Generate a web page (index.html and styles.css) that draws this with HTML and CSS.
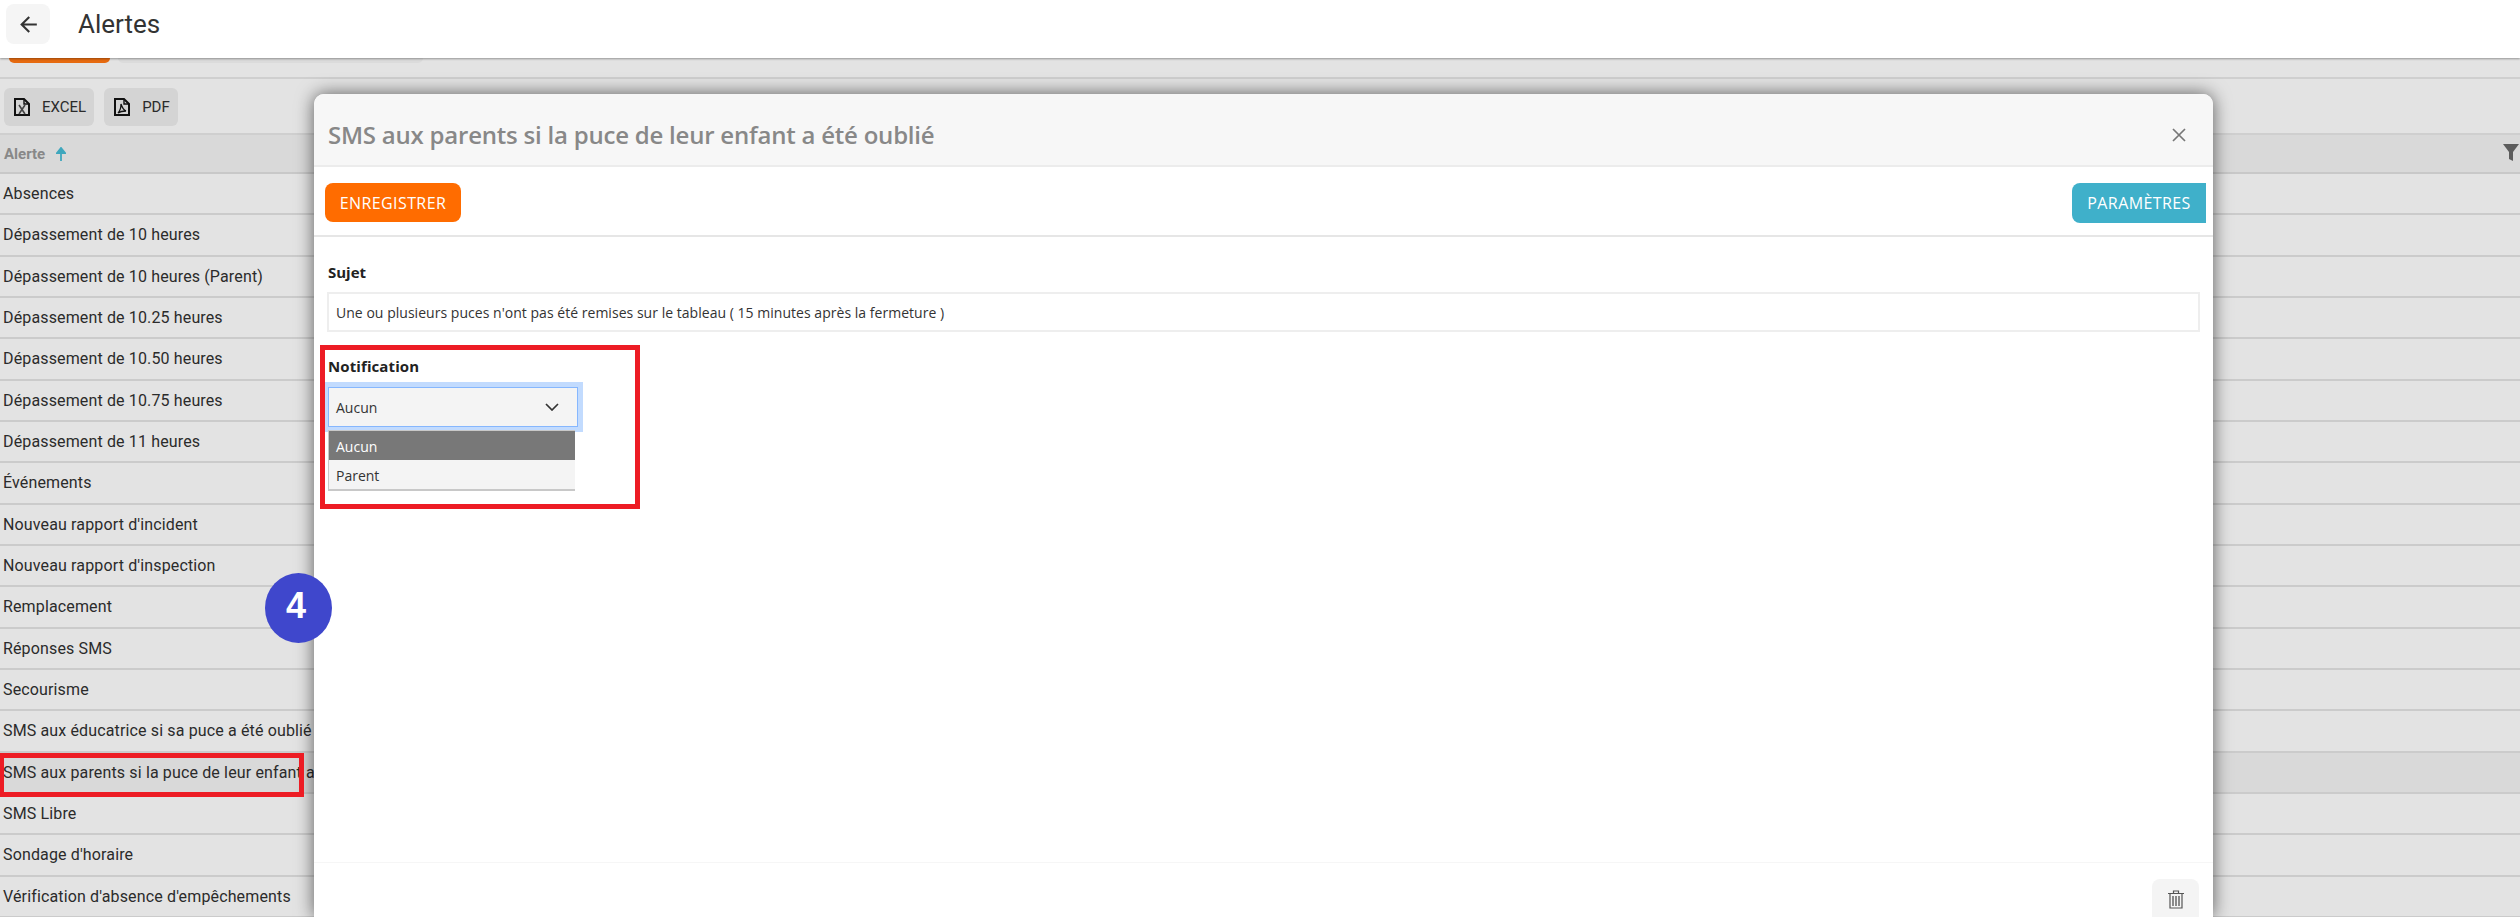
FILE: index.html
```html
<!DOCTYPE html>
<html lang="fr">
<head>
<meta charset="utf-8">
<title>Alertes</title>
<link rel="stylesheet" href="styles.css">
</head>
<body>
<div class="page">
  <header class="topbar">
    <button class="back" aria-label="Retour">
      <svg viewBox="0 0 24 24" width="25" height="25"><path d="M20 11H7.83l5.59-5.59L12 4l-8 8 8 8 1.41-1.41L7.83 13H20z" fill="#333"/></svg>
    </button>
    <h1 class="page-title">Alertes</h1>
  </header>
  <div class="tabstrip"><span class="tab tab-active"></span><span class="tab tab-rest"></span></div>
  <div class="toolbar">
    <button class="tool">
      <svg viewBox="0 0 16 18" width="16" height="18"><path d="M1 1h9l5 5v11H1z" fill="none" stroke="#111" stroke-width="2"/><path d="M10 1v5h5" fill="none" stroke="#111" stroke-width="1.4"/><path d="M5 7l6 9M11 7l-6 9" stroke="#444" stroke-width="1.6"/></svg>
      EXCEL
    </button>
    <button class="tool">
      <svg viewBox="0 0 16 18" width="16" height="18"><path d="M1 1h9l5 5v11H1z" fill="none" stroke="#111" stroke-width="2"/><path d="M10 1v5h5" fill="none" stroke="#111" stroke-width="1.4"/><path d="M7 6c1 3 2 6 5 7-3 0-6 .6-8 2 2-2 3-6 3-9z" fill="none" stroke="#111" stroke-width="1.3"/></svg>
      PDF
    </button>
  </div>
  <div class="thead">
    <span class="th-label">Alerte</span>
    <svg class="sort" viewBox="0 0 10 14" width="10" height="14"><path d="M5 14V3M1 6l4-5 4 5z" fill="#3fa7bd" stroke="#3fa7bd" stroke-width="1.8"/></svg>
    <svg class="filter" viewBox="0 0 16 17" width="16" height="17"><path d="M0 0h16l-6 8v9l-4-2V8z" fill="#5c5c5c"/></svg>
  </div>
  <ul class="rows">
    <li class="row">Absences</li>
    <li class="row">Dépassement de 10 heures</li>
    <li class="row">Dépassement de 10 heures (Parent)</li>
    <li class="row">Dépassement de 10.25 heures</li>
    <li class="row">Dépassement de 10.50 heures</li>
    <li class="row">Dépassement de 10.75 heures</li>
    <li class="row">Dépassement de 11 heures</li>
    <li class="row">Événements</li>
    <li class="row">Nouveau rapport d'incident</li>
    <li class="row">Nouveau rapport d'inspection</li>
    <li class="row">Remplacement</li>
    <li class="row">Réponses SMS</li>
    <li class="row">Secourisme</li>
    <li class="row">SMS aux éducatrice si sa puce a été oublié</li>
    <li class="row row-selected">SMS aux parents si la puce de leur enfant a été oublié</li>
    <li class="row">SMS Libre</li>
    <li class="row">Sondage d'horaire</li>
    <li class="row">Vérification d'absence d'empêchements</li>
  </ul>

  <section class="modal">
    <div class="modal-head">
      <h2 class="modal-title">SMS aux parents si la puce de leur enfant a été oublié</h2>
      <svg class="close" viewBox="0 0 14 14" width="14" height="14"><path d="M1 1l12 12M13 1L1 13" stroke="#777" stroke-width="1.7"/></svg>
    </div>
    <div class="modal-actions">
      <button class="btn-save">ENREGISTRER</button>
      <button class="btn-params">PARAMÈTRES</button>
    </div>
    <div class="modal-body">
      <label class="field-label">Sujet</label>
      <div class="input">Une ou plusieurs puces n'ont pas été remises sur le tableau ( 15 minutes après la fermeture )</div>
      <label class="field-label notif-label">Notification</label>
      <div class="select">
        <span>Aucun</span>
        <svg viewBox="0 0 14 8" width="14" height="8"><path d="M1 1l6 6 6-6" fill="none" stroke="#333" stroke-width="1.7"/></svg>
      </div>
      <ul class="options">
        <li class="option option-on">Aucun</li>
        <li class="option">Parent</li>
      </ul>
    </div>
    <div class="modal-foot">
      <button class="btn-trash" aria-label="Supprimer">
        <svg viewBox="0 0 16 19" width="16" height="19"><path d="M0 3.500h16M5.500 3V1h5v2M2 4v14h12V4" fill="none" stroke="#555" stroke-width="1.2"/><path d="M5 6v10M8 6v10M11 6v10" stroke="#666" stroke-width="1.5"/></svg>
      </button>
    </div>
  </section>

  <div class="mark mark-row"></div>
  <div class="mark mark-notif"></div>
  <div class="badge">4</div>
</div>
</body>
</html>
```
FILE: styles.css
```css
* { box-sizing: border-box; }
html, body { margin: 0; padding: 0; }
button { font: inherit; border: 0; padding: 0; }
ul { list-style: none; margin: 0; padding: 0; }
h1, h2 { margin: 0; font-weight: 400; }

.page {
  position: relative;
  height: 917px;
  overflow: hidden;
  background: #e3e3e3;
  font-family: Roboto, sans-serif;
  color: #2b2b2b;
}

.topbar {
  height: 58px;
  background: #fff;
  display: flex;
  align-items: center;
  padding: 0 0 10px 6px;
  box-shadow: 0 1px 2px rgba(0,0,0,.35);
  position: relative;
  z-index: 1;
}
.back {
  width: 44px;
  height: 40px;
  background: #f5f5f5;
  border-radius: 8px;
  display: flex;
  align-items: center;
  justify-content: center;
}
.page-title { font-size: 26px; margin-left: 28px; color: #333; line-height: 40px; }

.tabstrip {
  height: 21px;
  display: flex;
  gap: 8px;
  padding-left: 9px;
  border-bottom: 2px solid #cfcfcf;
}
.tab { height: 5px; border-radius: 0 0 8px 8px; }
.tab-active { width: 101px; background: #e66a10; }
.tab-rest { width: 305px; background: #dbdbdb; }

.toolbar {
  height: 56px;
  display: flex;
  gap: 10px;
  padding: 9px 4px 0;
  border-bottom: 2px solid #cfcfcf;
}
.tool {
  height: 38px;
  padding: 0 8px 0 10px;
  background: #d4d4d4;
  border-radius: 6px;
  display: flex;
  align-items: center;
  gap: 12px;
  font-size: 15px;
  color: #2b2b2b;
}

.thead {
  height: 39px;
  background: #d9d9d9;
  display: flex;
  align-items: center;
  padding: 0 1px 0 4px;
  border-bottom: 2px solid #c8c8c8;
}
.th-label { font-size: 15px; font-weight: 700; color: #888; }
.sort { margin-left: 11px; }
.filter { margin-left: auto; margin-top: -3px; }

.row {
  height: 41.33px;
  display: flex;
  align-items: center;
  padding-left: 3px;
  font-size: 16px;
  letter-spacing: .14px;
  white-space: nowrap;
  border-bottom: 2px solid #cbcbcb;
}
.row-selected { background: #d9d9d9; }

.modal {
  position: absolute;
  left: 314px;
  top: 94px;
  width: 1899px;
  height: 823px;
  background: #fff;
  border-radius: 10px 10px 0 0;
  box-shadow: 0 0 18px rgba(0,0,0,.6);
  display: flex;
  flex-direction: column;
  font-family: "Open Sans", sans-serif;
}
.modal-head {
  height: 73px;
  flex: none;
  background: #f7f7f7;
  border-bottom: 2px solid #ececec;
  border-radius: 10px 10px 0 0;
  display: flex;
  align-items: center;
  justify-content: space-between;
  padding: 10px 27px 0 14px;
}
.modal-title { font-size: 24px; font-weight: 600; color: #888; letter-spacing: -.22px; }
.modal-actions {
  height: 70px;
  flex: none;
  display: flex;
  justify-content: space-between;
  align-items: flex-start;
  padding: 16px 7px 0 11px;
  border-bottom: 2px solid #e6e6e6;
}
.btn-save, .btn-params {
  height: 39px;
  font-size: 16px;
  letter-spacing: .4px;
  color: #fff;
}
.btn-save { width: 136px; background: #ff6c00; border-radius: 8px; }
.btn-params { width: 134px; height: 40px; background: #3fb0ca; border-radius: 8px 0 0 8px; }

.modal-body { flex: 1; padding: 25px 13px 0 14px; }
.field-label { display: block; font-size: 15px; font-weight: 700; color: #222; line-height: 20px; }
.input {
  height: 40px;
  margin: 10px 0 0 -1px;
  padding: 0 7px;
  display: flex;
  align-items: center;
  border: 2px solid #eee;
  font-size: 14px;
  letter-spacing: .03px;
  color: #333;
}
.notif-label { margin-top: 24px; letter-spacing: .1px; }
.select {
  width: 250px;
  height: 40px;
  margin-top: 11px;
  padding: 0 18px 0 7px;
  display: flex;
  align-items: center;
  justify-content: space-between;
  background: #f4f4f4;
  border: 1px solid #86b7fe;
  box-shadow: 0 0 0 5px #c2dbfe;
  font-size: 14px;
  color: #333;
  position: relative;
}
.options {
  width: 247px;
  margin-top: 3px;
  border-left: 1px solid #c8c8c8;
  border-bottom: 2px solid #c8c8c8;
  border-top: 1px solid #c8c8c8;
  position: relative;
}
.option {
  height: 29px;
  padding: 2px 0 0 7px;
  display: flex;
  align-items: center;
  background: #f4f4f4;
  font-size: 14px;
  color: #333;
}
.option-on { background: #787878; color: #fff; }

.modal-foot {
  height: 55px;
  flex: none;
  border-top: 1px solid #f6f6f6;
  padding: 16px 14px 0 0;
  display: flex;
  justify-content: flex-end;
}
.btn-trash {
  width: 47px;
  height: 46px;
  background: #f4f4f4;
  border-radius: 8px;
  display: flex;
  align-items: center;
  justify-content: center;
  padding-bottom: 6px;
}

.mark { position: absolute; border: 5px solid #ed1c24; }
.mark-row { left: -1px; top: 753px; width: 305px; height: 44px; }
.mark-notif { left: 320px; top: 345px; width: 320px; height: 164px; }

.badge {
  position: absolute;
  left: 265px;
  top: 573px;
  width: 67px;
  height: 70px;
  padding: 0 5px 4px 0;
  border-radius: 50%;
  background: #3f47cc;
  color: #fff;
  font-family: "Liberation Sans", sans-serif;
  font-weight: 700;
  font-size: 36px;
  display: flex;
  align-items: center;
  justify-content: center;
}
```
